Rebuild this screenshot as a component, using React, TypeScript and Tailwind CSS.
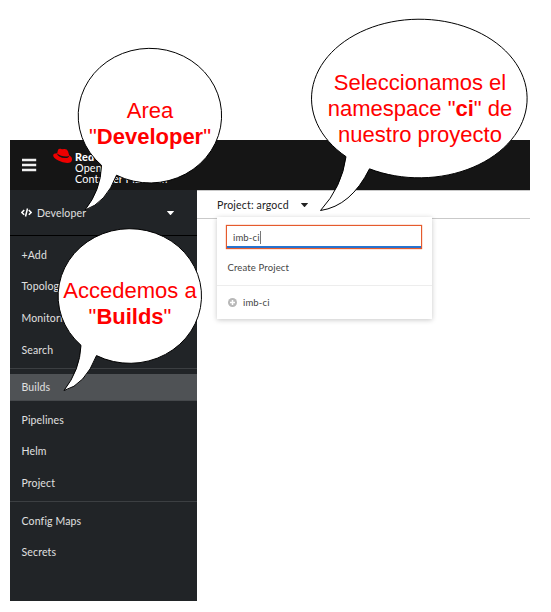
import React from "react";

function NavItem({ label, active = false }: { label: string; active?: boolean }) {
  return (
    <div
      className={
        active
          ? "flex h-[27px] shrink-0 items-center border-b border-[#45484b] bg-[#4f5255] pt-px pl-[11.5px]"
          : "flex h-[31.7px] shrink-0 items-center pl-[11.5px]"
      }
    >
      {label}
    </div>
  );
}

function Caret({ className = "" }: { className?: string }) {
  return (
    <svg className={className} width="7" height="4" viewBox="0 0 7 4" fill="currentColor">
      <path d="M.5 0h6q.5.1.3.6L4 3.7q-.5.4-1 0L.2.6Q0 .1.5 0Z" />
    </svg>
  );
}

function Bubble({ box, path, view, children }: { box: string; path: string; view: string; children: React.ReactNode }) {
  return (
    <div className={"absolute " + box}>
      <svg className="absolute inset-0 h-full w-full" viewBox={view}>
        <path d={path} fill="#fff" stroke="#000" strokeWidth="1" />
      </svg>
      <div className="relative text-center font-['Liberation_Sans',Arial,sans-serif] text-[22px] leading-[26px] tracking-normal whitespace-nowrap text-[#ff0000]">
        {children}
      </div>
    </div>
  );
}

export default function App() {
  return (
    <div className="relative h-[612px] w-[551px] overflow-hidden bg-white pt-[140px] pl-[10px] font-[Lato,sans-serif] text-[10.5px] leading-none tracking-[0.14px]">
      <div className="flex h-[461px] w-[520px] flex-col">
        <header className="flex h-[50px] shrink-0 bg-[#151515] text-white">
          <svg className="mt-[18px] ml-[12px] shrink-0" width="15" height="14" viewBox="0 0 15 14" fill="#f0f0f0">
            <path d="M0 .8h14.2v2.4H0zM0 5.8h14.2v2.4H0zM0 10.8h14.2v2.4H0z" />
          </svg>
          <svg className="mt-[8px] ml-[16px] shrink-0" width="20" height="16" viewBox="0 0 20 16">
            <path d="M5 2.1Q5.8.3 7.7.8l1.2.5L11.4.9q2.6-.1 3.6 2.3l1.2 4q3.1 1.6 2.8 4.5-.3 3.3-4.7 3.3-4.8 0-9-2.4Q.3 10 .2 7.5.1 5.3 4.2 5.2Z" fill="#ee0000" />
            <path d="M4.2 5.5q-.4 1.5 2.1 3 2.6 1.5 5.8 1.6 3.8.1 4.1-2.7-.3 1.2-3.2 1.1Q7.5 8.4 4.2 5.5Z" fill="#151515" />
          </svg>
          <div className="mt-[11px] ml-[2px] text-[10.8px] leading-[11px] whitespace-nowrap">
            <b className="block font-black tracking-[0.3px]">Red Hat</b>
            <div>OpenShift</div>
            <div>Container Platform</div>
          </div>
        </header>
        <div className="flex min-h-0 flex-1">
          <aside className="flex w-[187px] shrink-0 flex-col bg-[#212427] text-[#e0e0e0]">
            <div className="flex h-[46px] shrink-0 items-center border-b border-black pl-[11px]">
              <svg width="11" height="9" viewBox="0 0 11 9" fill="none" stroke="#fff" strokeWidth="1.5">
                <path d="M3.2 2 .9 4.5l2.3 2.3M7.8 2l2.3 2.5-2.3 2.3M6.5.5l-2 8" />
              </svg>
              <span className="ml-[5px] pt-[1.5px]">Developer</span>
              <Caret className="ml-auto mr-[23px] text-white" />
            </div>
            <nav className="flex flex-col">
              <div className="h-[3px]" />
              <NavItem label="+Add" />
              <NavItem label="Topology" />
              <NavItem label="Monitoring" />
              <NavItem label="Search" />
              <div className="mt-[2.2px] mb-[5px] h-px bg-[#3c3f42]" />
              <NavItem label="Builds" active />
              <div className="h-[3px]" />
              <NavItem label="Pipelines" />
              <NavItem label="Helm" />
              <NavItem label="Project" />
              <div className="mt-[2px] mb-[3px] h-px bg-[#3c3f42]" />
              <NavItem label="Config Maps" />
              <NavItem label="Secrets" />
            </nav>
          </aside>
          <main className="min-w-0 flex-1 bg-white text-[9.5px] text-[#444]">
            <div className="flex h-[29px] items-center border-t border-b border-[#c9c9c9] pl-[20px] text-[#222]">
              <span className="w-[72px] pt-[2px] text-[10.6px] whitespace-nowrap">Project: argocd</span>
              <Caret className="ml-[12px]" />
            </div>
            <div className="relative -mt-[2px] ml-[20px] h-[102px] w-[215px] bg-white pt-[8px] shadow-[0_1px_5px_rgba(0,0,0,0.22)]">
              <div className="ml-[9px] h-[24px] w-[196px] border border-[#e55b2d] shadow-[0_0_1px_#e55b2d]">
                <div className="flex h-[22px] items-center border-b-2 border-[#2673cf] pt-[3px] pl-[6px]">
                  <span className="pt-px">imb-ci</span>
                  <i className="h-[13px] w-px bg-[#777]" />
                </div>
              </div>
              <div className="flex h-[37px] items-center border-b border-[#ededed] pt-[2px] pl-[10.5px]">Create Project</div>
              <div className="flex h-[32px] items-center pl-[11px]">
                <svg width="9" height="9" viewBox="0 0 9 9">
                  <circle cx="4.5" cy="4.5" r="4.5" fill="#b8b8b8" />
                  <path d="M4.5 2v5M2 4.5h5" stroke="#fff" strokeWidth="1.5" />
                </svg>
                <span className="ml-[6px] pt-[2px]">imb-ci</span>
              </div>
            </div>
          </main>
        </div>
      </div>

      <Bubble
        box="left-[76px] top-[46px] h-[168px] w-[148px] pt-[52px]"
        view="76 46 148 168"
        path="M101.5 165.3A71.7 67.3 0 1 1 116.5 175.2Q106 203 85 210Q101 190 101.5 165.3Z"
      >
        <div>Area</div>
        <div>"<b>Developer</b>"</div>
      </Bubble>
      <Bubble
        box="left-[310px] top-[17px] h-[196px] w-[220px] pt-[53px]"
        view="310 17 220 196"
        path="M346 156.65A107.8 79.3 0 1 1 369.5 168.84Q351 206 320.5 210.5Q342 187 346 156.65Z"
      >
        <div>Seleccionamos el</div>
        <div>namespace "<b>ci</b>" de</div>
        <div>nuestro proyecto</div>
      </Bubble>
      <Bubble
        box="left-[56px] top-[226px] h-[168px] w-[148px] pt-[52px]"
        view="56 226 148 168"
        path="M81 345.3A71.7 67.3 0 1 1 96.5 355.6Q85 385 64 390.5Q80 370 81 345.3Z"
      >
        <div>Accedemos a</div>
        <div>"<b>Builds</b>"</div>
      </Bubble>
    </div>
  );
}
